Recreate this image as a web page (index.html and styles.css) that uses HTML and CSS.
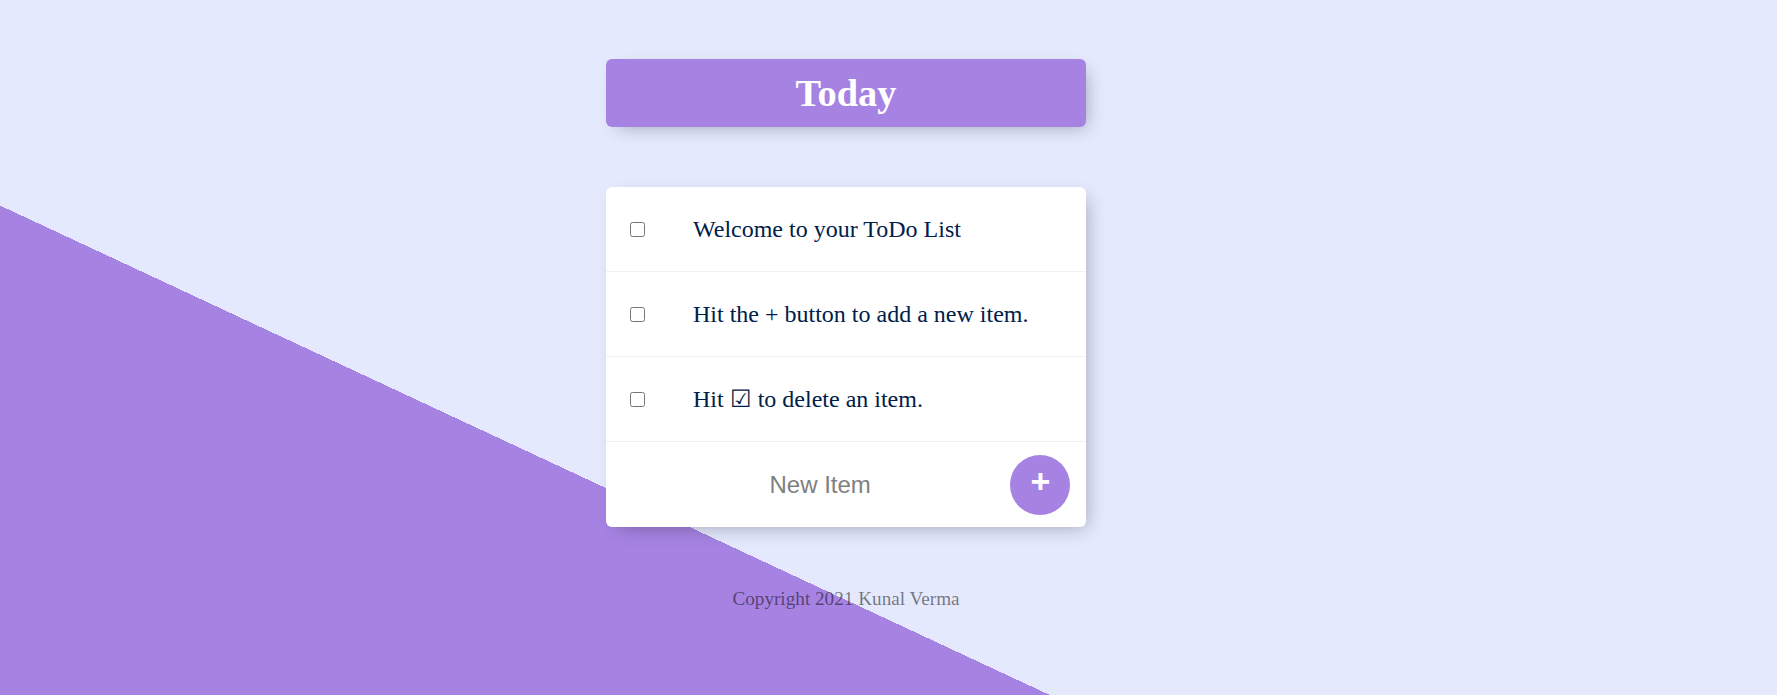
FILE: index.html
```html
<!DOCTYPE html>
<html lang="en">
<head>
<meta charset="utf-8">
<title>ToDo List</title>
<link rel="stylesheet" href="styles.css">
</head>
<body>
<div class="box heading">
  <h1 class="title">Today</h1>
</div>
<div class="box">
  <div class="item">
    <input class="check" type="checkbox">
    <p class="text">Welcome to your ToDo List</p>
  </div>
  <div class="item">
    <input class="check" type="checkbox">
    <p class="text">Hit the + button to add a new item.</p>
  </div>
  <div class="item">
    <input class="check" type="checkbox">
    <p class="text">Hit ☑ to delete an item.</p>
  </div>
  <form class="item add-form"><input class="new-item" type="text" placeholder="New Item" autocomplete="off"><button class="add-btn" type="button">+</button></form>
</div>
<footer class="footer">Copyright 2021 Kunal Verma</footer>
</body>
</html>
```

FILE: styles.css
```css
html {
  background-color: #E4E9FD;
  background-image: linear-gradient(25deg, #A683E3 50%, #E4E9FD 50%);
  background-repeat: no-repeat;
  background-size: 1692px 1200px;
  min-height: 1200px;
  font-family: "Liberation Serif", "Times New Roman", serif;
}

body {
  margin: 0;
  width: 1692px;
  padding-top: 1px;
}

.box {
  max-width: 480px;
  margin: 58px auto 60px;
  background: #fff;
  border-radius: 6px;
  box-shadow: 6px 6px 18px -6px rgba(0, 0, 0, 0.3);
}

.heading {
  background-color: #A683E3;
  text-align: center;
}

.title {
  margin: 0;
  padding: 12px;
  color: #fff;
  font-size: 38.4px;
  font-weight: bold;
  line-height: 44px;
}

.item {
  min-height: 84px;
  display: flex;
  align-items: center;
  border-bottom: 1px solid #F1F1F1;
}

.item:last-child {
  border-bottom: 0;
  min-height: 85px;
}

.check {
  margin: 24px;
  width: 15px;
  height: 15px;
  flex: none;
}

.text {
  margin: 0;
  padding: 24px;
  font-size: 24px;
  color: #00204a;
}

.add-form {
  margin: 0 0 0 24px;
  text-align: center;
}

.new-item {
  text-align: center;
  height: 72px;
  padding: 1.2px 2.4px;
  border: none;
  font-size: 24px;
  font-family: "Liberation Sans", Arial, sans-serif;
  width: 375.6px;
  background: transparent;
  color: #000;
}

.new-item::placeholder {
  color: grey;
  opacity: 1;
}

.new-item:focus {
  outline: none;
}

.add-btn {
  min-height: 60px;
  width: 60px;
  border-radius: 50%;
  border: 0;
  background-color: #A683E3;
  color: #fff;
  font-size: 34px;
  font-weight: bold;
  font-family: "Liberation Sans", Arial, sans-serif;
  padding: 0 0 7px;
  line-height: 1;
  flex: none;
}

.footer {
  padding-top: 1px;
  color: rgba(0, 0, 0, 0.5);
  text-align: center;
  font-size: 19.2px;
}
```
